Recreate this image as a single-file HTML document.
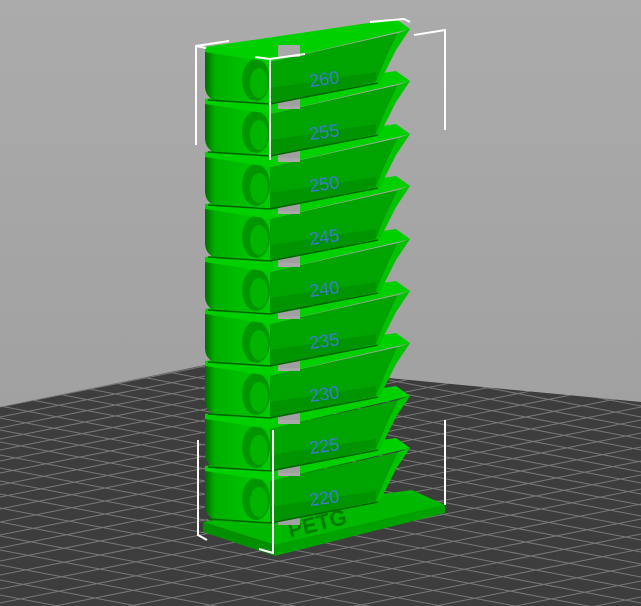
<!DOCTYPE html>
<html><head><meta charset="utf-8"><style>
html,body{margin:0;padding:0;width:641px;height:606px;overflow:hidden;background:#a3a3a3}
</style></head><body>
<svg width="641" height="606" viewBox="0 0 641 606" xmlns="http://www.w3.org/2000/svg" style="display:block">
<defs>
<linearGradient id="bg" x1="0" y1="0" x2="0" y2="1"><stop offset="0" stop-color="#ababab"/><stop offset="1" stop-color="#9c9c9c"/></linearGradient>
<clipPath id="bed"><polygon points="0,407 220,362 641,402 641,606 0,606"/></clipPath>
<linearGradient id="lf" x1="0" y1="0" x2="1" y2="0"><stop offset="0" stop-color="#006a00"/><stop offset="0.15" stop-color="#00b000"/><stop offset="1" stop-color="#00cc00"/></linearGradient>
<g id="blk">
  <rect x="278" y="96" width="22" height="10" fill="#a0a0a0"/>
  <path d="M205,50 L270,60 L270,104 L218,102 Q205,98 205,86 Z" fill="url(#lf)"/>
  <ellipse cx="256" cy="80" rx="14" ry="21" fill="#009600"/>
  <ellipse cx="259" cy="83" rx="9" ry="15" fill="#00b400"/>
  <polygon points="205,47 396,19 410,29 270,62 205,52" fill="#00d000"/>
  <polygon points="270,62 398,33 386,58 376,82 270,104" fill="#00a400"/>
  <polygon points="270,88 376,72 376,82 270,104" fill="#009400"/>
  <polygon points="398,33 410,29 396,50 380,82 376,82 386,58" fill="#00c400"/>
  <polyline points="208,100 270,104 378,83" fill="none" stroke="#006400" stroke-width="1.5"/>
  <rect x="278" y="45" width="22" height="12" fill="#a8a8a8"/>
</g>
</defs>
<rect width="641" height="606" fill="url(#bg)"/>
<polygon points="0,407 220,362 641,402 641,606 0,606" fill="#3d3d3d"/>
<g clip-path="url(#bed)" stroke="#8c8c8c" stroke-width="1" opacity="0.75">
  <line x1="0" y1="407" x2="641" y2="279"/><line x1="0" y1="417" x2="641" y2="289"/>
  <line x1="0" y1="428" x2="641" y2="300"/><line x1="0" y1="439" x2="641" y2="311"/>
  <line x1="0" y1="450" x2="641" y2="322"/><line x1="0" y1="461" x2="641" y2="333"/>
  <line x1="0" y1="473" x2="641" y2="345"/><line x1="0" y1="485" x2="641" y2="357"/>
  <line x1="0" y1="497" x2="641" y2="369"/><line x1="0" y1="509" x2="641" y2="381"/>
  <line x1="0" y1="522" x2="641" y2="394"/><line x1="0" y1="535" x2="641" y2="407"/>
  <line x1="0" y1="548" x2="641" y2="420"/><line x1="0" y1="561" x2="641" y2="433"/>
  <line x1="0" y1="575" x2="641" y2="447"/><line x1="0" y1="589" x2="641" y2="461"/>
  <line x1="0" y1="603" x2="641" y2="475"/><line x1="0" y1="617" x2="641" y2="489"/>
  <line x1="0" y1="632" x2="641" y2="504"/><line x1="0" y1="647" x2="641" y2="519"/>
  <line x1="0" y1="662" x2="641" y2="534"/><line x1="0" y1="677" x2="641" y2="549"/>
  <line x1="0" y1="693" x2="641" y2="565"/><line x1="0" y1="709" x2="641" y2="581"/>
  <line x1="0" y1="725" x2="641" y2="597"/><line x1="0" y1="741" x2="641" y2="613"/>
  <line x1="0" y1="295" x2="641" y2="417"/><line x1="0" y1="306" x2="641" y2="428"/>
  <line x1="0" y1="317" x2="641" y2="439"/><line x1="0" y1="328" x2="641" y2="450"/>
  <line x1="0" y1="340" x2="641" y2="462"/><line x1="0" y1="350" x2="641" y2="472"/>
  <line x1="0" y1="361" x2="641" y2="483"/><line x1="0" y1="372" x2="641" y2="494"/>
  <line x1="0" y1="383" x2="641" y2="505"/><line x1="0" y1="394" x2="641" y2="516"/>
  <line x1="0" y1="406" x2="641" y2="528"/><line x1="0" y1="418" x2="641" y2="540"/>
  <line x1="0" y1="430" x2="641" y2="552"/><line x1="0" y1="442" x2="641" y2="564"/>
  <line x1="0" y1="455" x2="641" y2="577"/><line x1="0" y1="468" x2="641" y2="590"/>
  <line x1="0" y1="481" x2="641" y2="603"/><line x1="0" y1="494" x2="641" y2="616"/>
  <line x1="0" y1="508" x2="641" y2="630"/><line x1="0" y1="522" x2="641" y2="644"/>
  <line x1="0" y1="536" x2="641" y2="658"/><line x1="0" y1="550" x2="641" y2="672"/>
  <line x1="0" y1="565" x2="641" y2="687"/><line x1="0" y1="580" x2="641" y2="702"/>
  <line x1="0" y1="595" x2="641" y2="717"/>
  <line x1="0" y1="284" x2="641" y2="406"/><line x1="0" y1="273" x2="641" y2="395"/>
</g>
<polygon points="203,522 275,545 445,505 412,490 300,505" fill="#00b800"/>
<polygon points="203,522 275,545 275,556 203,532" fill="#009000"/>
<polygon points="275,545 445,505 445,513 275,556" fill="#00a200"/>
<text x="290" y="538" font-family="Liberation Sans, sans-serif" font-weight="bold" font-size="22" fill="#007a00" transform="rotate(-14 290 538)">PETG</text>
<use href="#blk" transform="translate(0,419)"/>
<use href="#blk" transform="translate(0,367)"/>
<use href="#blk" transform="translate(0,314)"/>
<use href="#blk" transform="translate(0,262)"/>
<use href="#blk" transform="translate(0,210)"/>
<use href="#blk" transform="translate(0,157)"/>
<use href="#blk" transform="translate(0,105)"/>
<use href="#blk" transform="translate(0,52)"/>
<use href="#blk" transform="translate(0,0)"/>
<g font-family="Liberation Sans, sans-serif" font-size="18" fill="#3d7bd0">
<text x="309" y="85" transform="rotate(-8 325 78)">260</text>
<text x="309" y="138" transform="rotate(-8 325 131)">255</text>
<text x="309" y="190" transform="rotate(-8 325 183)">250</text>
<text x="309" y="243" transform="rotate(-8 325 236)">245</text>
<text x="309" y="295" transform="rotate(-8 325 288)">240</text>
<text x="309" y="347" transform="rotate(-8 325 340)">235</text>
<text x="309" y="400" transform="rotate(-8 325 393)">230</text>
<text x="309" y="452" transform="rotate(-8 325 445)">225</text>
<text x="309" y="504" transform="rotate(-8 325 497)">220</text>
</g>
<g stroke="#ffffff" stroke-width="2" fill="none">
  <polyline points="196,145 196,46 229,41"/><line x1="196" y1="46" x2="206" y2="48"/>
  <line x1="270" y1="160" x2="270" y2="59"/><polyline points="255,57 270,59 305,54"/>
  <polyline points="370,22 404,19 410,22"/><polyline points="414,35 445,30 445,130"/>
  <polyline points="445,420 445,505"/>
  <polyline points="198,440 198,535 207,540"/>
  <polyline points="273,430 273,553 259,549"/>
</g>
</svg>
</body></html>
